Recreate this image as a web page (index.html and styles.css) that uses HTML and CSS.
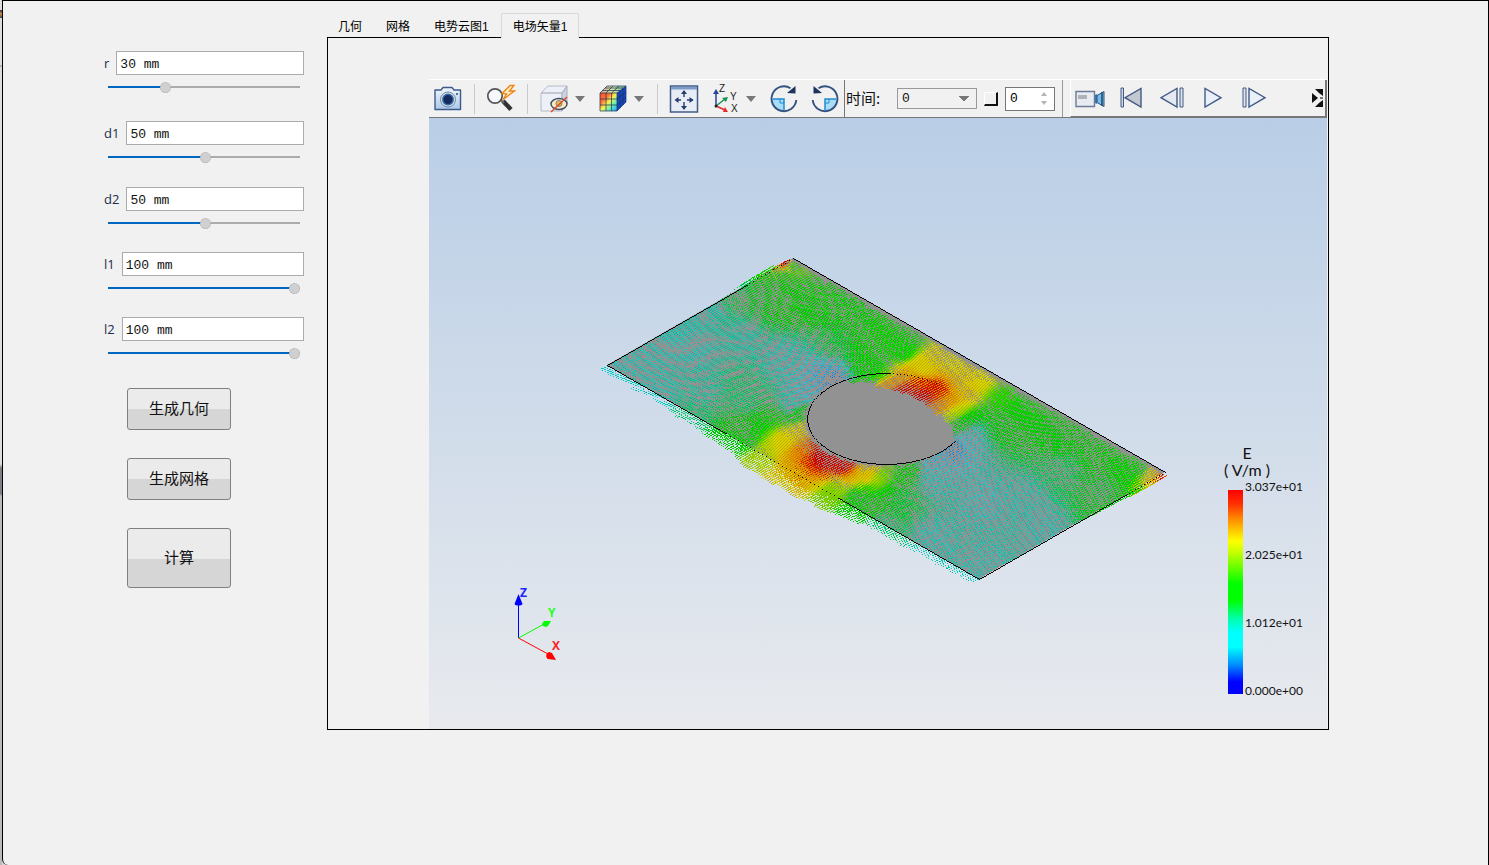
FILE: index.html
```html
<!DOCTYPE html>
<html lang="zh-CN">
<head>
<meta charset="utf-8">
<title>电场矢量</title>
<link rel="stylesheet" href="styles.css">
</head>
<body>
<div class="edge"></div>
<main class="window">
  <form class="params">
    <div class="param"><div class="line"><label for="r">r</label><input class="box" id="r" value="30 mm"></div><input class="slider s30" type="range" min="0" max="100" value="29" aria-label="r"></div>
    <div class="param"><div class="line"><label for="d1">d1</label><input class="box" id="d1" value="50 mm"></div><input class="slider s50" type="range" min="0" max="100" value="51" aria-label="d1"></div>
    <div class="param"><div class="line"><label for="d2">d2</label><input class="box" id="d2" value="50 mm"></div><input class="slider s50" type="range" min="0" max="100" value="51" aria-label="d2"></div>
    <div class="param"><div class="line"><label for="l1">l1</label><input class="box" id="l1" value="100 mm"></div><input class="slider s100" type="range" min="0" max="100" value="100" aria-label="l1"></div>
    <div class="param"><div class="line"><label for="l2">l2</label><input class="box" id="l2" value="100 mm"></div><input class="slider s100" type="range" min="0" max="100" value="100" aria-label="l2"></div>
    <div class="actions">
      <button type="button">生成几何</button>
      <button type="button">生成网格</button>
      <button type="button" class="tall">计算</button>
    </div>
  </form>
  <section class="results">
    <div class="tabs" role="tablist">
      <button role="tab">几何</button><button role="tab">网格</button><button role="tab">电势云图1</button><button role="tab" aria-selected="true" class="active">电场矢量1</button>
    </div>
    <div class="panel">
      <div class="toolbar">
        <button class="tool" aria-label="截图"><svg viewBox="0 0 30 30"><defs><linearGradient id="cam" x2="0" y2="1"><stop stop-color="#f2f7fc"/><stop offset="1" stop-color="#a9c9e8"/></linearGradient></defs><path d="M2 6h6l2-2.500h9L21 6h6.500v19.500H2z" fill="url(#cam)" stroke="#3c5a8c" stroke-width="1.400" stroke-linejoin="round"/><circle cx="15" cy="15.500" r="7.500" fill="#d8e4f0" stroke="#6f87a8"/><circle cx="15" cy="15.500" r="5.200" fill="#122c60" stroke="#3a679e" stroke-width="1.500"/><circle cx="24" cy="10" r="1" fill="#244578"/></svg></button>
        <span class="sep"></span>
        <button class="tool" aria-label="缩放"><svg viewBox="0 0 30 30"><path d="M17 17l8 8.500" stroke="#333" stroke-width="4.500"/><path d="M14 15l4 4" stroke="#666" stroke-width="2"/><circle cx="9" cy="12" r="7.200" fill="#f5f7fb" stroke="#555" stroke-width="1.700"/><path d="M24 1.500l-8 8 4.500.5-3.500 5.500L28.500 7 23.500 7 28 1.500z" fill="#fce8c0" stroke="#ee8410" stroke-width="1.300"/></svg></button>
        <span class="sep"></span>
        <button class="tool" aria-label="透明"><svg viewBox="0 0 30 30"><path d="M2 9l7-7h19l-5 7zM2 9h21v18H2z" fill="#edf0f6" stroke="#b4bac8"/><path d="M23 9l5-7v17l-5 8z" fill="#ccd2e0" stroke="#a8aebc"/><ellipse cx="20" cy="20" rx="8" ry="5.500" fill="#fbeab4" stroke="#394c72" stroke-width="1.400"/><circle cx="20" cy="19.500" r="3" fill="#e9b95c" stroke="#768191"/><path d="M12 28L28 13" stroke="#d94a2c" stroke-width="1.400"/></svg></button>
        <button class="caret" aria-label="透明选项"></button>
        <button class="tool gap" aria-label="颜色"><svg viewBox="0 0 30 30"><defs><linearGradient id="heat" x2="1" y2="1"><stop stop-color="#ff4d24"/><stop offset=".3" stop-color="#ff7033"/><stop offset=".5" stop-color="#f8f34b"/><stop offset=".75" stop-color="#57ebc0"/><stop offset="1" stop-color="#2497ff"/></linearGradient><linearGradient id="lid" x2="1"><stop stop-color="#e4a18c"/><stop offset=".5" stop-color="#d8e8a1"/><stop offset="1" stop-color="#67bca4"/></linearGradient></defs><path d="M2 9h17v18H2z" fill="url(#heat)"/><path d="M2 9l7-7h19l-9 7z" fill="url(#lid)"/><path d="M19 9l9-7v16l-9 9z" fill="#1747c4"/><path d="M2 9h17v18H2zM8 9v18M13.500 9v18M2 15h17M2 21h17M2 9l7-7h19l-9 7M8 9l7-7M13.500 9L21 2M4.500 6.500H22M7 4h18M28 2v16l-9 9M22 6.500V24M25 4.500V21M19 15l9-7M19 21l9-8" fill="none" stroke="#183057" stroke-width=".7"/></svg></button>
        <button class="caret" aria-label="颜色选项"></button>
        <span class="sep wide"></span>
        <button class="tool" aria-label="适应窗口"><svg viewBox="0 0 30 30"><path d="M1.500 2h27v26h-27z" fill="#e8edf5" stroke="#425b86" stroke-width="1.500"/><path d="M2 3h26v2.500H2z" fill="#7d9cca"/><path d="M15 8v5M15 18v6M7 16h5M18 16h6" stroke="#263e6d" stroke-width="1.400"/><path d="M15 6l3 4h-6zM15 26l3-4h-6zM5.500 16l4-3v6zM24.500 16l-4-3v6z" fill="#263e6d"/></svg></button>
        <button class="tool tight" aria-label="视角"><svg viewBox="0 0 30 30"><path d="M6 22V8" stroke="#24459c" stroke-width="1.500"/><path d="M6 5l3 5H3z" fill="#24459c"/><path d="M6 22l9-7" stroke="#16934a" stroke-width="1.500"/><path d="M18 13l-2 5-4-4z" fill="#16934a"/><path d="M6 22l9 4" stroke="#e52b2b" stroke-width="1.500"/><path d="M18 28l-3-5-2 5z" fill="#e52b2b"/><circle cx="6" cy="22" r="1.500" fill="#222"/><g class="axis"><text x="9" y="8">Z</text><text x="20" y="16">Y</text><text x="21" y="28">X</text></g></svg></button>
        <button class="caret" aria-label="视角选项"></button>
        <button class="tool gap" aria-label="顺时针旋转"><svg viewBox="0 0 30 30"><path d="M2.500 15H15v12.500A12.500 12.500 0 0 1 2.500 15z" fill="#a8dcf7"/><path d="M4 15h11v11" fill="none" stroke="#1f8bd0" stroke-width="1.500"/><path d="M11 15v4h4" fill="none" stroke="#1f8bd0"/><path d="M21.500 4.200A12.400 12.400 0 1 0 27.300 16" fill="none" stroke="#34527f" stroke-width="1.900"/><path d="M26.500 2v7.500l-8.500-.5z" fill="#1c335e"/></svg></button>
        <button class="tool tight" aria-label="逆时针旋转"><svg viewBox="0 0 30 30"><path d="M27.500 15H15v12.500A12.500 12.500 0 0 0 27.500 15z" fill="#a8dcf7"/><path d="M26 15H15v11" fill="none" stroke="#1f8bd0" stroke-width="1.500"/><path d="M19 15v4h-4" fill="none" stroke="#1f8bd0"/><path d="M8.500 4.200A12.400 12.400 0 1 1 2.700 16" fill="none" stroke="#34527f" stroke-width="1.900"/><path d="M3.500 2v7.500l8.500-.5z" fill="#1c335e"/></svg></button>
        <div class="time">
          <label for="time">时间:</label>
          <select id="time"><option>0</option></select>
          <button class="step" aria-label="应用"></button>
          <div class="spin"><input id="frame" value="0" aria-label="帧"><svg viewBox="0 0 8 14"><path d="M4 0l3 4H1zM4 13l3-4H1z" fill="#b4b4b4"/></svg></div>
        </div>
        <div class="player">
          <button class="tool" aria-label="录像"><svg viewBox="0 0 30 30"><path d="M1 8.500h18.500v15H1z" fill="#e8ebf0" stroke="#6d7b96" stroke-width="1.400"/><path d="M3 12h9v4H3z" fill="#aeb3ba"/><path d="M20 12l2-1v10l-2-1z" fill="#3b78aa"/><path d="M22 12.500l7-4v15l-7-4z" fill="#6fbde8" stroke="#33557f"/><path d="M27 9v14" stroke="#244368" stroke-width="1.500"/></svg></button>
          <button class="tool tight" aria-label="起始"><svg viewBox="0 0 30 30"><path d="M5 5h2.500v19H5z" fill="#d0d6e0" stroke="#425b86"/><path d="M25 5.500v18.500L9 14.700z" fill="#c3c8d0" stroke="#425b86" stroke-width="1.400"/></svg></button>
          <button class="tool tight" aria-label="后退"><svg viewBox="0 0 30 30"><path d="M20 5.500V24L4 14.700z" fill="#e6eaf0" stroke="#425b86" stroke-width="1.400"/><path d="M23 5h3v19h-3z" fill="#dbe2ed" stroke="#425b86"/></svg></button>
          <button class="tool tight" aria-label="播放"><svg viewBox="0 0 30 30"><path d="M7 5.500V24l16-9.300z" fill="#eaf0f7" stroke="#425b86" stroke-width="1.400"/></svg></button>
          <button class="tool tight" aria-label="前进"><svg viewBox="0 0 30 30"><path d="M4 5h3v19H4z" fill="#dbe2ed" stroke="#425b86"/><path d="M10 5.500V24l16-9.300z" fill="#eaf0f7" stroke="#425b86" stroke-width="1.400"/></svg></button>
          <button class="more" aria-label="更多"><svg viewBox="0 0 11 18"><path d="M3 0h8v7L7 4zM11 11v7H3l4-4zM0 4l6 5-6 5z" fill="#111"/><path d="M8 8h3v2H8z" fill="#777"/></svg></button>
        </div>
      </div>
      <div class="view">
        <canvas id="field" class="field" width="580" height="350"></canvas>
        <svg class="triad" viewBox="0 0 50 80"><path d="M10.500 53V14" stroke="#00f"/><path d="M10.500 9l4 10c-1 2-7 2-8 0z" fill="#00f"/><path d="M10.500 53L36 39" stroke="#0f0"/><path d="M43 36l-3 5c-3 2-6 0-6-2l2-3z" fill="#0f0"/><path d="M10.500 53L40 69" stroke="red"/><path d="M48 75l-8-1c-3-2-2-6 1-7l3 1z" fill="red"/><text x="12" y="12" fill="#22f">Z</text><text x="40" y="32" fill="#2f2">Y</text><text x="44" y="65" fill="#f22">X</text></svg>
        <div class="legend">
          <div class="unit">E<br>( V/m )</div>
          <div class="scale"><div class="bar"></div><div class="ticks"><span>3.037e+01</span><span>2.025e+01</span><span>1.012e+01</span><span>0.000e+00</span></div></div>
        </div>
      </div>
    </div>
  </section>
</main>
<script src="field.js"></script>
</body>
</html>
```

FILE: styles.css
```css
* { box-sizing: border-box; }
body { margin: 0; display: flex; min-height: 100vh; background: #d4d4d4; color: #111; font-family: "Liberation Sans", "Noto Sans CJK SC", sans-serif; font-size: 12px; }
button { padding: 0; border: 0; background: none; color: inherit; font: inherit; }
.edge { width: 2px; background: linear-gradient(#ddd 10px, #333 10px, #d98c4a 14px, #345 18px, #ddd 18px, #ddd 65px, #888 66px, #ddd 67px, #ddd 464px, #7b8086 468px, #7b8086 494px, #bbb 496px); }
.window { flex: 1; min-width: 0; display: flex; align-items: stretch; background: #f1f1f1; border: 1px solid #000; border-bottom: 0; border-bottom-left-radius: 6px; }

.params { width: 324px; flex: none; padding: 50px 23px 0 101px; }
.param { margin-bottom: 17px; }
.param:first-child { margin-bottom: 22px; }
.param:nth-child(2) { margin-bottom: 18px; }
.line { display: flex; align-items: center; gap: 7px; height: 24px; }
.line label { font-family: "Open Sans", sans-serif; font-size: 13px; color: #1d2d4d; }
.box { flex: 1; min-width: 0; height: 24px; padding: 2px 3px 0; border: 1px solid #ababab; background: #fff; font-family: "Liberation Mono", monospace; font-size: 13px; color: #111; }
.slider { -webkit-appearance: none; appearance: none; display: block; width: calc(100% - 8px); height: 24px; margin: 0 4px; background: linear-gradient(90deg, #0067c0 var(--fill), #ababab 0) center / 100% 2px no-repeat; }
.slider::-webkit-slider-thumb { -webkit-appearance: none; width: 11px; height: 11px; border: 1px dotted #aaa; border-radius: 50%; background: #d0d0d0; }
.s30 { --fill: 30%; }
.s50 { --fill: 51%; }
.s100 { --fill: 98%; }
.actions { display: flex; flex-direction: column; gap: 28px; padding: 6px 0 0 23px; }
.actions button { width: 104px; height: 42px; padding-bottom: 3px; border: 1px solid #808080; border-radius: 3px; background: linear-gradient(#ebebeb 51%, #d6d6d6 51%); font-family: "Noto Sans CJK SC", sans-serif; font-size: 15px; }
.actions .tall { height: 60px; }

.results { flex: 1; min-width: 0; display: flex; flex-direction: column; padding: 12px 159px 135px 0; }
.tabs { display: flex; height: 25px; margin-bottom: -1px; position: relative; }
.tabs button { padding: 0 11px 2px; border: 1px solid transparent; border-bottom: 0; color: #000; }
.tabs button:first-child { padding-left: 10px; }
.tabs .active { border-color: #d9d9d9; background: #f1f1f1; }
.panel { flex: 1; display: flex; flex-direction: column; padding: 41px 1px 0 101px; border: 1px solid #000; }

.toolbar { display: flex; align-items: center; height: 39px; border-top: 1px solid #fff; border-bottom: 1px solid #777; overflow: hidden; }
.tool { flex: none; width: 38px; height: 34px; display: flex; align-items: center; justify-content: center; }
.tool svg { width: 30px; height: 30px; }
.gap { margin-left: 7px; }
.tight { margin-left: 3px; }
.sep { flex: none; width: 1px; height: 30px; margin: 0 7px; background: #c9c9c9; }
.wide { margin-left: 11px; }
.caret { flex: none; width: 14px; height: 20px; display: flex; align-items: center; justify-content: center; }
.caret::before { content: ""; border: 5px solid transparent; border-top: 6px solid #777; border-bottom: 0; }
.axis { font: 10px "Liberation Sans", sans-serif; fill: #222; }
.time { flex: none; display: flex; align-items: center; gap: 7px; width: 219px; height: 38px; padding-left: 1px; border-left: 1px solid #777; border-right: 1px solid #999; }
.time label { width: 44px; padding-bottom: 2px; font-family: "Noto Sans CJK SC", sans-serif; font-size: 15px; white-space: nowrap; }
.time select { -webkit-appearance: none; appearance: none; width: 80px; height: 21px; padding: 0 4px; border: 1px solid #999; border-radius: 0; background: conic-gradient(from -40deg at 50% 100%, #777 80deg, transparent 0) right 7px center / 10px 6px no-repeat #f1f1f1; font: 13px "Liberation Mono", monospace; color: #111; }
.step { width: 14px; height: 14px; border: 1px solid #fff; border-right: 2px solid #111; border-bottom: 2px solid #111; background: #f1f1f1; }
.spin { display: flex; align-items: center; width: 50px; height: 24px; padding-right: 6px; border: 1px solid #777; background: #fff; }
.spin input { width: 34px; padding: 0 4px; border: 0; background: none; font: 13px "Liberation Mono", monospace; }
.spin svg { width: 8px; height: 14px; }
.player { flex: 1; min-width: 0; display: flex; align-items: center; height: 37px; margin-left: 7px; border: solid #777; border-width: 0 2px 1px 0; border-left: 1px solid #fff; }
.more { margin-left: auto; width: 13px; height: 18px; }
.more svg { display: block; width: 11px; height: 18px; }

.view { flex: 1; position: relative; background: linear-gradient(#b9cee6, #e8eaee); overflow: hidden; }
.field { position: absolute; left: 168px; top: 130px; }
.triad { position: absolute; left: 79px; bottom: 64px; width: 50px; height: 80px; font: bold 12px "Open Sans", sans-serif; overflow: visible; }
.legend { position: absolute; right: 15px; bottom: 32px; width: 84px; font-family: Lato, sans-serif; color: #111; }
.unit { width: 56px; margin: 0 0 3px -9px; font-size: 16px; line-height: 17px; text-align: center; white-space: nowrap; }
.scale { display: flex; gap: 2px; height: 216px; }
.bar { width: 15px; margin: 9px 0 3px; background: linear-gradient(#f00 0%, #f30 7%, #f80 14%, #ff0 25%, #cf0 30%, #0f0 46%, #0f0 54%, #0fa 63%, #0ff 70%, #0ff 77%, #08f 86%, #00f 94%); }
.ticks { display: flex; flex-direction: column; justify-content: space-between; font-size: 12px; line-height: 12px; }
```

FILE: field.js
```js
(function () {
  const canvas = document.getElementById('field');
  const g = canvas.getContext('2d');
  g.translate(-597, -248);

  // Plate corner and its long and short edges in view space
  const origin = [607, 365], U = [372, 214], V = [186, -107];
  const at = (u, v) => [origin[0] + U[0] * u + V[0] * v, origin[1] + U[1] * u + V[1] * v];

  // Field strength samples: x, y, fraction of the maximum
  const samples = [
    [607,365,.36],[650,345,.37],[700,310,.38],[740,285,.44],[758,275,.5],[770,270,.58],[781,264,.95],[790,268,.56],
    [690,350,.37],[740,340,.39],[800,300,.5],[850,310,.5],[760,300,.47],[780,285,.5],[830,345,.46],[780,360,.37],
    [815,380,.27],[827,385,.16],[800,395,.32],[790,405,.38],[797,414,.5],[800,430,.66],[812,445,.88],
    [820,455,1],[838,465,.92],[868,472,.68],[800,450,.78],[785,440,.65],[760,460,.62],[790,485,.64],
    [830,490,.6],[740,430,.49],[690,420,.43],[650,395,.37],[700,390,.4],[740,400,.43],[720,455,.52],
    [880,474,.6],[905,470,.5],[860,500,.5],[900,500,.46],[880,530,.43],[930,480,.37],[930,462,.29],
    [950,450,.2],[965,443,.32],[970,435,.37],[962,426,.48],[955,412,.62],[946,404,.8],[932,396,1],
    [915,388,1],[898,381,.75],[880,378,.57],[870,365,.51],[900,350,.53],[920,370,.65],[950,360,.64],
    [980,380,.64],[965,390,.68],[1000,400,.57],[1030,400,.53],[1000,430,.48],[1060,440,.49],
    [1100,450,.49],[1130,465,.52],[1145,478,.64],[1154,481,.95],[1160,474,.8],[1100,490,.46],[1060,470,.44],
    [1020,500,.38],[980,500,.35],[980,570,.37],[1040,530,.37],[930,540,.37],[1125,492,.5],[900,330,.52]
  ];
  function strength(x, y) {
    let sum = 0, weight = 0;
    for (const [sx, sy, s] of samples) {
      const d = (x - sx) ** 2 + (y - sy) ** 2 + 12;
      const w = 1 / Math.pow(d, 1.7);
      sum += w * s; weight += w;
    }
    return sum / weight;
  }

  const stops = [[0,0,0,255],[.28,0,200,255],[.34,0,225,235],[.4,0,215,170],[.48,0,220,0],[.56,20,225,0],[.64,225,220,0],[.78,240,140,0],[.9,225,15,0],[1,215,0,0]];
  function colour(t, k) {
    let i = 1;
    while (i < stops.length - 1 && t > stops[i][0]) i++;
    const a = stops[i - 1], b = stops[i], f = Math.min(1, Math.max(0, (t - a[0]) / (b[0] - a[0])));
    const c = n => Math.round((a[n] + (b[n] - a[n]) * f) * k);
    return `rgb(${c(1)},${c(2)},${c(3)})`;
  }

  function dotLine(points, every) {
    g.fillStyle = '#000';
    let count = 0;
    for (let i = 1; i < points.length; i++) {
      const [a, b] = [points[i - 1], points[i]];
      const n = Math.max(1, Math.round(Math.max(Math.abs(b[0] - a[0]), Math.abs(b[1] - a[1]))));
      for (let k = 0; k < n; k++) {
        if (count++ % every) continue;
        g.fillRect(Math.round(a[0] + (b[0] - a[0]) * k / n), Math.round(a[1] + (b[1] - a[1]) * k / n), 1, 1);
      }
    }
  }
  const arc = (from, to) => {
    const out = [];
    for (let a = from; a <= to; a += 2) out.push(at(.5 + .15 * Math.cos(a * Math.PI / 180), .5 + .3 * Math.sin(a * Math.PI / 180)));
    return out;
  };

  const corners = [at(0, 0), at(0, 1), at(1, 1), at(1, 0), at(0, 0)];
  g.fillStyle = '#929292';
  g.beginPath();
  corners.forEach(p => g.lineTo(p[0], p[1]));
  g.fill();

  // Curved thinning of the dashes; weaker vectors leave more of the plate bare
  function visible(x, y, m) {
    const dx = x - 885, dy = y - 418;
    const a = .37 * x + .61 * y + .0009 * (dx * dx * .4 + dy * dy);
    const f = a - Math.floor(a);
    return f < Math.min(1, .47 + Math.max(0, m - .36) * 2.1);
  }

  // One dash per mesh node, laid down along the field direction
  const stepU = .0056, stepV = .0125;
  for (let v = 1; v >= 0; v -= stepV) {
    for (let u = 0; u <= 1; u += stepU) {
      const uu = u + .003 * Math.sin(v * 17 + u * 9), vv = v + .005 * Math.sin(u * 31);
      if (uu < 0 || uu > 1 || vv < 0 || vv > 1) continue;
      if (((uu - .5) / .15) ** 2 + ((vv - .5) / .3) ** 2 < 1) continue;
      const p = at(uu, vv);
      const m = strength(p[0] - 7, p[1] + 4);
      const top = Math.exp(-((p[0] - 765) ** 2 + (p[1] - 272) ** 2) / 1200);
      const right = Math.exp(-((p[0] - 1145) ** 2 + (p[1] - 482) ** 2) / 1200);
      const n = Math.round(Math.min(24, 44 * Math.pow(m, 1.7)));
      for (let k = 2; k <= n; k++) {
        const x = Math.round(p[0] - k + 5 * right - 2 * top);
        const y = Math.round(p[1] + k * .57 - 4 * top + 3 * right);
        if (!visible(x, y, m)) continue;
        g.fillStyle = colour(m, (x + y) % 3 ? .97 : .84);
        g.fillRect(x, y, 1, 1);
      }
    }
  }

  dotLine([at(0, .75), at(0, 0), at(.32, 0)], 1);
  dotLine([at(.32, 0), at(.62, 0)], 4);
  dotLine([at(.62, 0), at(1, 0), at(1, .8)], 1);
  dotLine([at(1, 1), at(0, 1)], 1);
  dotLine([at(1, 1), at(1, .8)], 3);
  dotLine([at(0, 1), at(0, .75)], 4);
  dotLine(arc(132, 378), 1);
  dotLine(arc(96, 132), 4);
})();
```
